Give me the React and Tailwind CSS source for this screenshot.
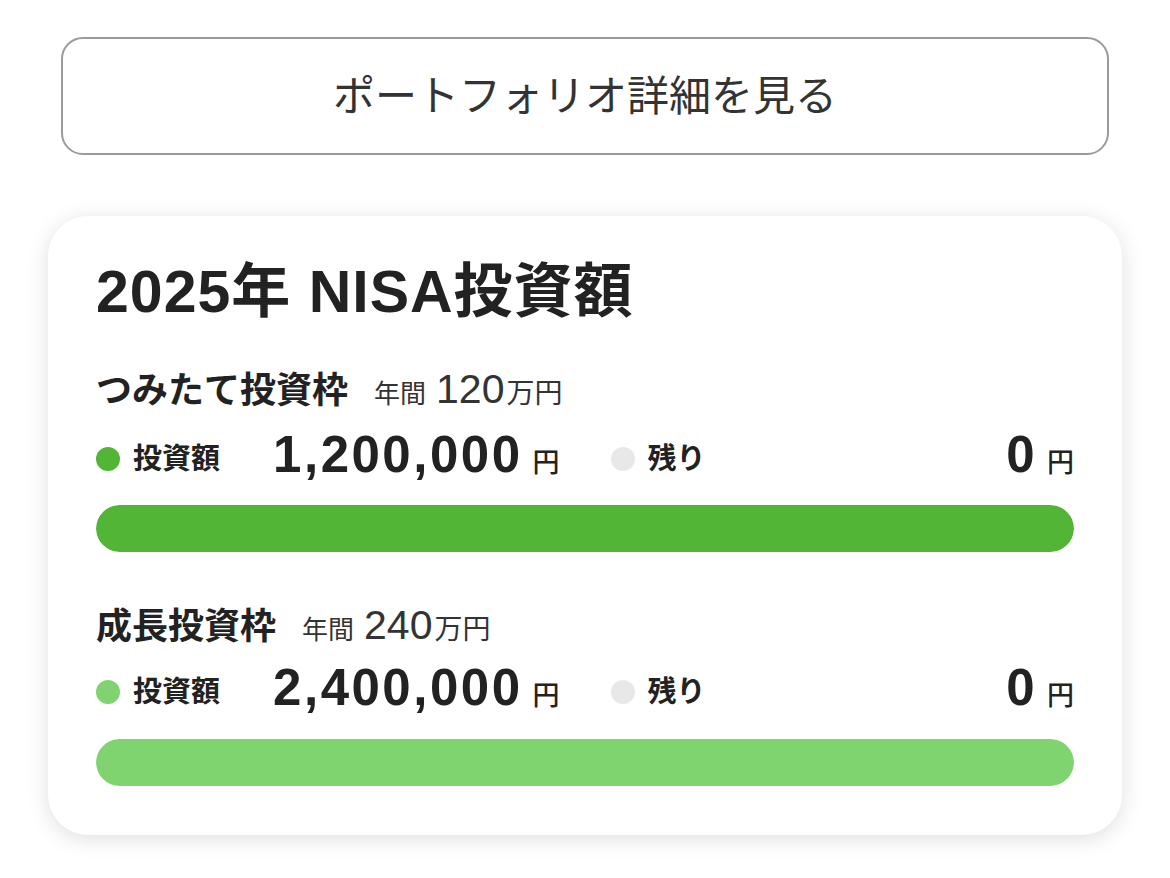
import React from 'react';

const sections = [
  {
    name: 'つみたて投資枠',
    limit: '120',
    invested: '1,200,000',
    rest: '0',
    color: 'bg-[#53b535]',
    wrap: 'mt-[43px]',
    rowMt: 'mt-[20px]',
    barMt: 'mt-[18px]',
  },
  {
    name: '成長投資枠',
    limit: '240',
    invested: '2,400,000',
    rest: '0',
    color: 'bg-[#80d470]',
    wrap: 'mt-[51px]',
    rowMt: 'mt-[17px]',
    barMt: 'mt-[19px]',
  },
];

const Amount = ({ value }) => (
  <div className="flex items-baseline gap-[10px]">
    <span className="text-[51px] font-bold tracking-[2.5px] leading-[48px]">{value}</span>
    <span className="text-[27px] font-medium leading-[48px]">円</span>
  </div>
);

const Legend = ({ dot, label }) => (
  <div className="flex items-center gap-[13px]">
    <span className={`w-[24px] h-[24px] rounded-full ${dot}`} />
    <span className="text-[29px] font-bold leading-[48px]">{label}</span>
  </div>
);

const Section = ({ s }) => (
  <div className={s.wrap}>
    {/* heading */}
    <div className="flex items-baseline h-[44px] leading-[44px]">
      <span className="text-[36px] font-bold">{s.name}</span>
      <span className="ml-[26px] text-[26px] text-[#333]">年間</span>
      <span className="ml-[10px] text-[41px] text-[#333]">{s.limit}</span>
      <span className="ml-[2px] text-[28px] text-[#333]">万円</span>
    </div>

    {/* amounts */}
    <div className={`${s.rowMt} grid grid-cols-2 gap-[51px]`}>
      <div className="flex items-center justify-between">
        <Legend dot={s.color} label="投資額" />
        <Amount value={s.invested} />
      </div>
      <div className="flex items-center justify-between">
        <Legend dot="bg-[#e8e8e8]" label="残り" />
        <Amount value={s.rest} />
      </div>
    </div>

    {/* bar */}
    <div className={`${s.barMt} h-[47px] rounded-full bg-[#e8e8e8] overflow-hidden`}>
      <div className={`h-full w-full rounded-full ${s.color}`} />
    </div>
  </div>
);

export default function App() {
  return (
    <div
      className="min-h-screen bg-white text-[#222] pt-[37px] pb-[44px]"
      style={{ fontFamily: '"Liberation Sans", "Noto Sans CJK JP", sans-serif' }}
    >
      <button className="block mx-[61px] w-[1048px] h-[118px] border-2 border-[#9a9a9a] rounded-[22px] bg-white text-[42px] font-normal text-[#333]">
        ポートフォリオ詳細を見る
      </button>

      <div className="mx-[48px] mt-[61px] bg-white rounded-[40px] shadow-[0_4px_22px_rgba(0,0,0,0.13)] px-[48px] pt-[44px] pb-[49px]">
        <h1 className="text-[59px] font-bold leading-[64px] tracking-[1px]">2025年 NISA投資額</h1>
        {sections.map((s) => (
          <Section key={s.name} s={s} />
        ))}
      </div>
    </div>
  );
}
